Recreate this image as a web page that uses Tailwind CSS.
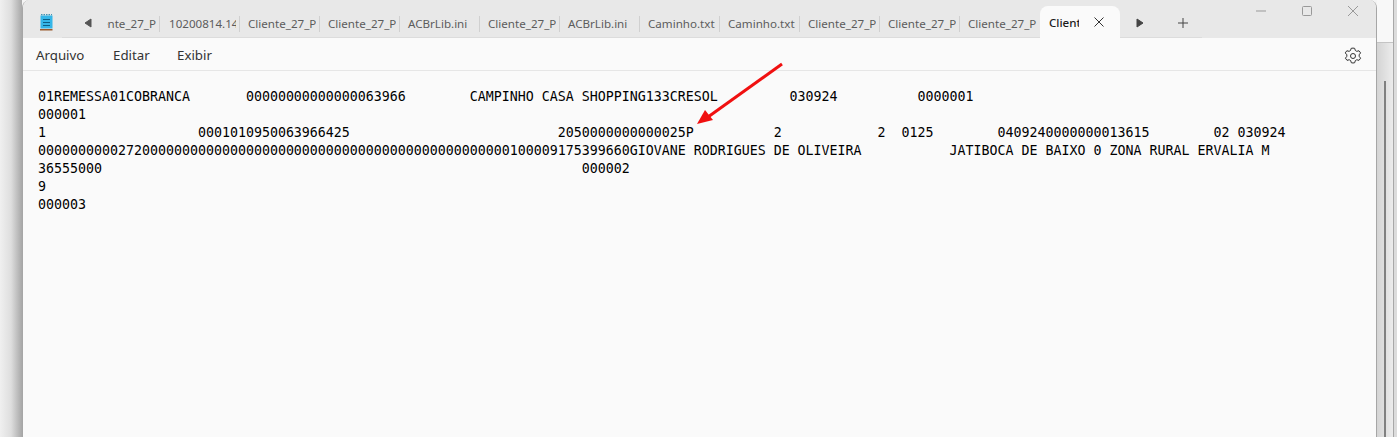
<!DOCTYPE html>
<html>
<head>
<meta charset="utf-8">
<script src="https://cdn.jsdelivr.net/npm/@tailwindcss/browser@4"></script>
</head>
<body class="m-0 overflow-hidden">
<div class="relative w-[1397px] h-[437px] flex overflow-hidden bg-[#f4f4f4] font-['Noto_Sans','Open_Sans',sans-serif]">
  <div class="w-[22px] h-full shrink-0 bg-gradient-to-r from-[#f0f0f0] via-[#dedede] to-[#a8a8a8]"></div>
  <div class="w-[1355px] h-full shrink-0 flex flex-col bg-[#fafafa] rounded-t-lg overflow-hidden border-l border-r border-[#a6a6a6]">
    <div class="h-[38px] shrink-0 bg-[#e8e8e8] flex items-end relative">
      <div class="absolute left-[39px] bottom-0 w-[1140px] h-px bg-[#dcdcdc]"></div>
      <div class="h-[38px] shrink-0 flex items-center pl-[17px]">
        <svg width="13" height="17" viewBox="0 0 13 17" class="mt-[6px]"><rect x="0.5" y="1.5" width="12" height="13" fill="#35b6e8"/><rect x="0" y="15" width="12.5" height="1.5" fill="#9a5a2c"/><path d="M1 0.7h11" stroke="#1e7fa6" stroke-dasharray="1.5 1"/><path d="M3 5.5h7M3 8.5h7M3 11.5h7" stroke="#0d5f86" stroke-width="1.2"/></svg>
      </div>
      <div class="w-[20px] h-[38px] ml-[25px] shrink-0 flex items-center pt-[8px] justify-center"><svg width="8" height="10" viewBox="0 0 8 10"><path d="M7 1v8L1 5z" fill="#555" stroke="#555" stroke-linejoin="round"/></svg></div>
      <div class="flex h-[30px] items-center pt-[2px] text-[11.6px] text-[#5c5c5c] whitespace-nowrap ml-[9px] shrink-0">
        <div class="w-[53px] h-[16px] overflow-hidden relative border-r border-[#d0d0d0] leading-[16px]"><span class="absolute right-[3px]">ente_27_P</span></div>
        <div class="w-[80px] h-[16px] overflow-hidden border-r border-[#d0d0d0] pl-[9px] pr-[3px] leading-[16px]"><div class="overflow-hidden">10200814.140</div></div>
        <div class="w-[80px] h-[16px] overflow-hidden border-r border-[#d0d0d0] pl-[8px] pr-[3px] leading-[16px]"><div class="overflow-hidden">Cliente_27_P</div></div>
        <div class="w-[80px] h-[16px] overflow-hidden border-r border-[#d0d0d0] pl-[8px] pr-[3px] leading-[16px]"><div class="overflow-hidden">Cliente_27_P</div></div>
        <div class="w-[80px] h-[16px] overflow-hidden border-r border-[#d0d0d0] pl-[8px] leading-[16px]">ACBrLib.ini</div>
        <div class="w-[80px] h-[16px] overflow-hidden border-r border-[#d0d0d0] pl-[8px] pr-[3px] leading-[16px]"><div class="overflow-hidden">Cliente_27_P</div></div>
        <div class="w-[80px] h-[16px] overflow-hidden border-r border-[#d0d0d0] pl-[8px] leading-[16px]">ACBrLib.ini</div>
        <div class="w-[80px] h-[16px] overflow-hidden border-r border-[#d0d0d0] pl-[8px] pr-[2px] leading-[16px]"><div class="overflow-hidden">Caminho.txt</div></div>
        <div class="w-[80px] h-[16px] overflow-hidden border-r border-[#d0d0d0] pl-[8px] leading-[16px]">Caminho.txt</div>
        <div class="w-[80px] h-[16px] overflow-hidden border-r border-[#d0d0d0] pl-[8px] pr-[3px] leading-[16px]"><div class="overflow-hidden">Cliente_27_P</div></div>
        <div class="w-[80px] h-[16px] overflow-hidden border-r border-[#d0d0d0] pl-[8px] pr-[3px] leading-[16px]"><div class="overflow-hidden">Cliente_27_P</div></div>
        <div class="w-[80px] h-[16px] overflow-hidden pl-[8px] pr-[3px] leading-[16px]"><div class="overflow-hidden">Cliente_27_P</div></div>
      </div>
      <div class="relative w-[80px] h-[32px] shrink-0 bg-[#fafafa] rounded-t-lg flex items-center text-[11.6px] font-medium text-[#1a1a1a] pl-[9px] pt-[2px]">
        <span class="w-[30px] overflow-hidden whitespace-nowrap">Cliente</span>
        <svg width="12" height="12" viewBox="0 0 12 12" class="ml-[14px] mb-[3px]"><path d="M1.5 1.5l9 9M10.5 1.5l-9 9" stroke="#333" fill="none"/></svg>
      </div>
      <div class="w-[40px] h-[30px] flex items-center justify-center shrink-0"><svg width="8" height="10" viewBox="0 0 8 10"><path d="M1 1v8l6-4z" fill="#444" stroke="#444" stroke-linejoin="round"/></svg></div>
      <div class="w-[46px] h-[30px] flex items-center justify-center shrink-0"><svg width="12" height="12" viewBox="0 0 12 12"><path d="M6 1v10M1 6h10" stroke="#444" fill="none"/></svg></div>
      <div class="absolute right-0 top-0 h-[22px] flex items-center">
        <div class="w-[46px] flex justify-center"><svg width="12" height="12" viewBox="0 0 12 12"><path d="M1 6h10" stroke="#999" fill="none"/></svg></div>
        <div class="w-[46px] flex justify-center"><svg width="12" height="12" viewBox="0 0 12 12"><rect x="1.5" y="1.5" width="9" height="9" rx="1" stroke="#999" fill="none"/></svg></div>
        <div class="w-[46px] flex justify-center"><svg width="12" height="12" viewBox="0 0 12 12"><path d="M1 1l10 10M11 1L1 11" stroke="#999" fill="none"/></svg></div>
      </div>
    </div>
    <div class="h-[33px] shrink-0 bg-[#fafafa] border-b border-[#e6e6e6] flex items-center text-[13.3px] text-[#333] pl-[13px] pr-[13px] pt-[3px]">
      <span class="w-[77px]">Arquivo</span>
      <span class="w-[64px]">Editar</span>
      <span>Exibir</span>
      <svg width="20" height="20" viewBox="0 0 24 24" class="ml-auto" fill="none" stroke="#333" stroke-width="1.2"><path d="M12 2.5l2 .3.8 2.6 1.7 1 2.7-.7 1.9 2.6-1.7 2.2v1.9l1.7 2.2-1.9 2.6-2.7-.7-1.7 1-.8 2.6-2 .3-2-.3-.8-2.6-1.7-1-2.7.7-1.9-2.6 1.7-2.2v-1.9L2.7 8.3l1.9-2.6 2.7.7 1.7-1 .8-2.6z" stroke-linejoin="round"/><circle cx="12" cy="12" r="3"/></svg>
    </div>
    <pre class="pt-[17px] pl-[15px] font-['DejaVu_Sans_Mono',monospace] text-[13.29px] leading-[18px] text-black m-0">01REMESSA01COBRANCA       00000000000000063966        CAMPINHO CASA SHOPPING133CRESOL         030924          0000001
000001
1                   0001010950063966425                          2050000000000025P          2            2  0125        0409240000000013615        02 030924
00000000002720000000000000000000000000000000000000000000000100009175399660GIOVANE RODRIGUES DE OLIVEIRA           JATIBOCA DE BAIXO 0 ZONA RURAL ERVALIA M
36555000                                                            000002
9
000003</pre>
  </div>
  <div class="w-[17px] h-full shrink-0 flex flex-col border-r border-[#a8a8a8]">
    <div class="h-[43px] shrink-0 bg-[#f8f8f8] border-b border-[#c4c4c4]"></div>
    <div class="flex-1 bg-gradient-to-r from-[#d4d4d4] to-[#ececec] pt-[38px] pl-[7px]"><div class="w-[2px] h-full bg-[#808080]"></div></div>
  </div>
  <div class="w-[3px] h-full shrink-0 bg-[#dcdcdc]"></div>
  <svg class="absolute left-[690px] top-[55px]" width="100" height="80" viewBox="690 55 100 80"><path d="M782 64L708 117" stroke="#f01010" stroke-width="3" fill="none"/><path d="M697 124l8-14 8 10z" fill="#f01010"/></svg>
</div>
</body>
</html>
